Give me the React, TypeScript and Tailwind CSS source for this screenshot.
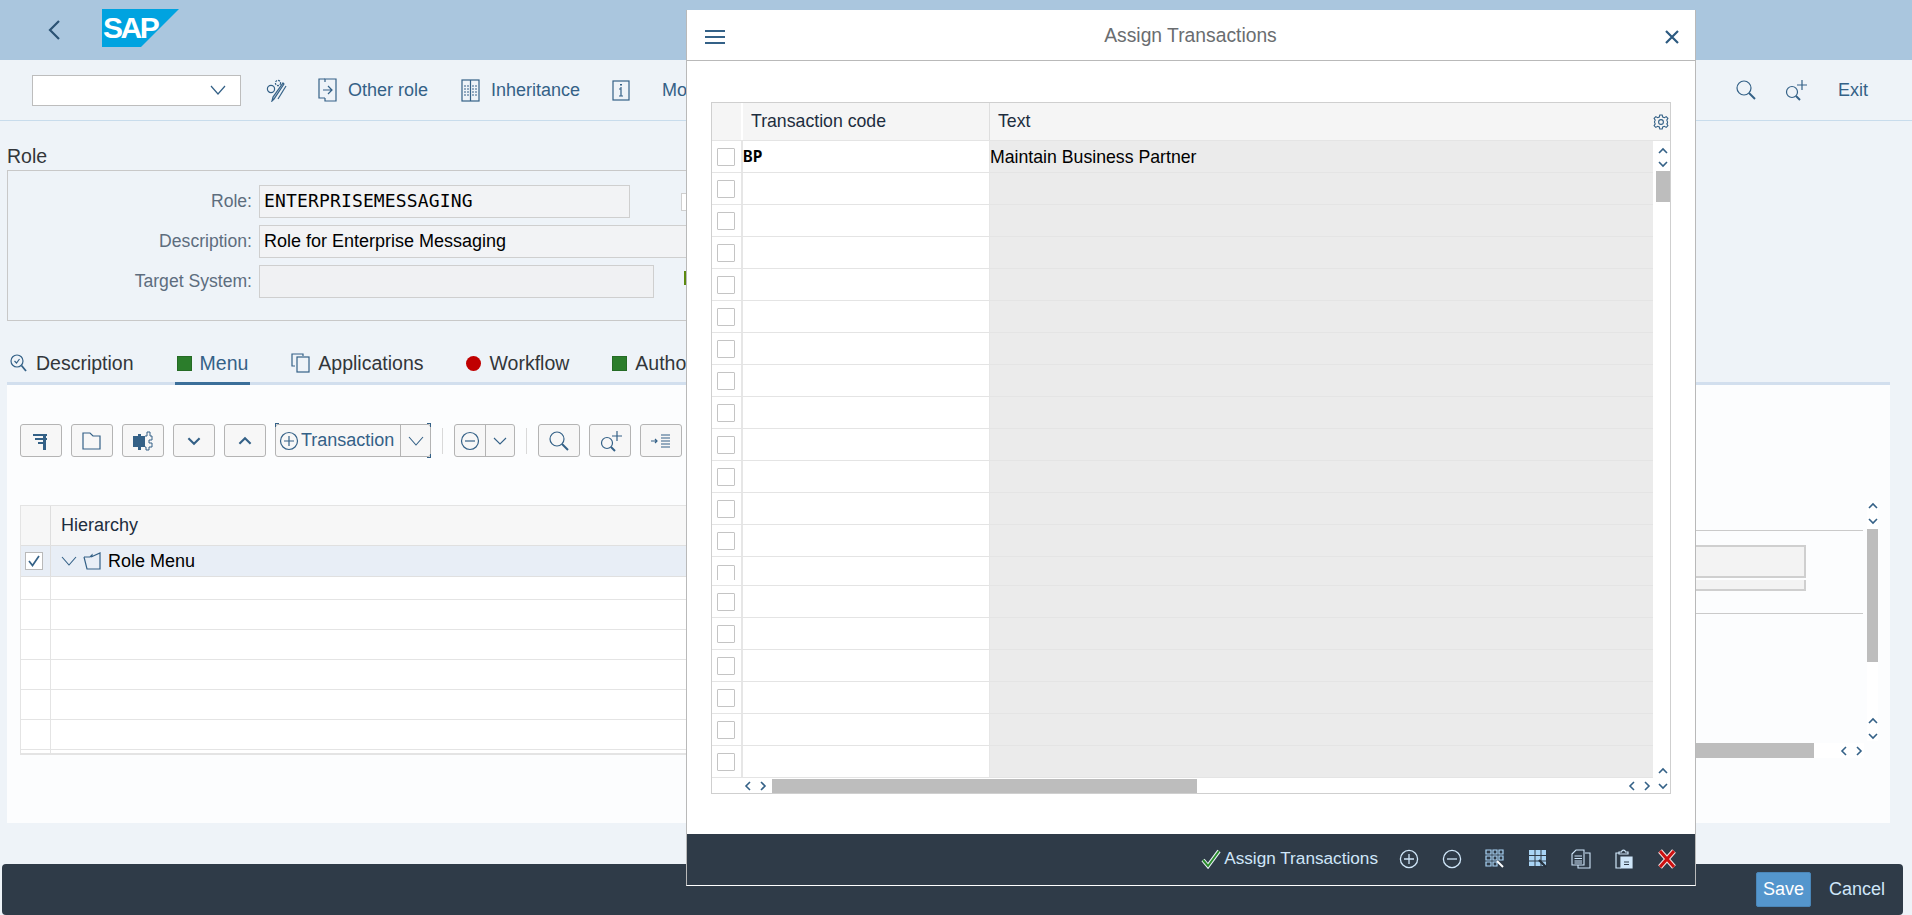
import type { ReactNode } from "react";

const blue = "#346187";

function Ico({ w = 20, h = 20, children, className = "" }: { w?: number; h?: number; children: ReactNode; className?: string }) {
  return (
    <svg width={w} height={h} viewBox={`0 0 ${w} ${h}`} fill="none" stroke={blue} strokeWidth="1.2" className={`shrink-0 ${className}`}>
      {children}
    </svg>
  );
}

function Chev({ dir, size = 10, color = "#346187", sw = 1.6 }: { dir: "up" | "down" | "left" | "right"; size?: number; color?: string; sw?: number }) {
  const d = { up: "M1 7L5 3L9 7", down: "M1 3L5 7L9 3", left: "M7 1L3 5L7 9", right: "M3 1L7 5L3 9" }[dir];
  return (
    <svg width={size} height={size} viewBox="0 0 10 10" fill="none" stroke={color} strokeWidth={sw} className="shrink-0">
      <path d={d} />
    </svg>
  );
}

function Search({ plus = false }: { plus?: boolean }) {
  return (
    <Ico w={24} h={22}>
      <circle cx={plus ? "9" : "10"} cy={plus ? "13" : "9"} r={plus ? "5.5" : "7"} />
      <path d={plus ? "M13 17L17 21" : "M15 14L21 20"} strokeWidth="2" />
      {plus && <path d="M19 1V11M14 6H24" />}
    </Ico>
  );
}

function ToolBtn({ children }: { children: ReactNode }) {
  return <div className="w-[42px] h-[33px] flex items-center justify-center bg-[#f7f7f7] border border-[#b4b4b4] rounded-[3px]">{children}</div>;
}

function Field({ label, value, mono, width, muted }: { label: string; value?: string; mono?: boolean; width: string; muted?: boolean }) {
  return (
    <div className="flex items-center h-[33px]">
      <div className="w-[251px] text-right pr-[7px] text-[17.6px] text-[#5d6d7e]">{label}</div>
      <div
        className={`${width} h-[33px] flex items-center px-[4px] border border-[#cfcfcf] ${muted ? "bg-[#f0f1f3]" : "bg-[#f2f3f5]"} ${mono ? "font-['DejaVu_Sans_Mono',monospace] text-[18px] tracking-[0.15px] text-black" : "text-black"}`}
      >
        {value}
      </div>
    </div>
  );
}

function Tab({ icon, label, active }: { icon: ReactNode; label: string; active?: boolean }) {
  return (
    <div className={`h-[43px] flex items-center gap-[8px] px-[2px] pt-[2px] -mb-[3px] border-b-[3px] text-[19.5px] ${active ? "border-[#3b6f9a] text-[#346187]" : "border-transparent text-[#32363a]"}`}>
      {icon}
      <span>{label}</span>
    </div>
  );
}

const greenSquare = <span className="w-[15px] h-[15px] bg-[#2b7d2b] border border-[#256b25]" />;

const bgRows = [23, 30, 30, 30, 30, 30, 4];
// row 14 in the popup table is clipped a little shorter, as in the SAP grid
const rowHeights = [32, 32, 32, 32, 32, 32, 32, 32, 32, 32, 32, 32, 32, 29, 32, 32, 32, 32, 32, 32];

function DialogTable() {
  return (
    <div className="w-[960px] h-[692px] flex flex-col border border-[#cfcfcf] bg-white text-[17.7px]">
      <div className="h-[38px] shrink-0 flex bg-[#f5f5f5] border-b border-[#e4e4e4] text-[#1d2d3e]">
        <div className="w-[31px] border-r-2 border-white" />
        <div className="w-[247px] pl-[8px] flex items-center border-r border-[#dedede]">Transaction code</div>
        <div className="flex-1 pl-[8px] flex items-center justify-between pr-[1px] text-[#1d2d3e]">
          <span>Text</span>
          <svg width="16" height="16" viewBox="0 0 16 16" fill="none" stroke={blue} strokeWidth="1.1">
            <circle cx="8" cy="8" r="2.4" />
            <path d="M6.8 1H9.2L9.7 3L11.4 3.7L13.2 2.6L14.9 4.3L13.8 6.1L14.5 7.8V8.2L14.5 9L13.8 9.9L14.9 11.7L13.2 13.4L11.4 12.3L9.7 13L9.2 15H6.8L6.3 13L4.6 12.3L2.8 13.4L1.1 11.7L2.2 9.9L1.5 8.2V7.8L2.2 6.1L1.1 4.3L2.8 2.6L4.6 3.7L6.3 3L6.8 1Z" />
          </svg>
        </div>
      </div>
      <div className="flex-1 flex min-h-0">
        <div className="flex-1 flex flex-col min-w-0">
          {rowHeights.map((h, i) => (
            <div key={i} className="flex shrink-0 border-b border-[#e4e4e4]" style={{ height: h }}>
              <div className="w-[31px] pr-[1px] border-r-2 border-[#e6e6e6] flex justify-center">
                <div className={`${h < 32 ? "h-[15px] mt-[8px]" : "h-[18px] mt-[7px]"} overflow-hidden`}>
                  <span className="block w-[18px] h-[18px] bg-white border border-[#c4c4c4] rounded-[1px]" />
                </div>
              </div>
              <div className="w-[247px] border-r border-[#e6e6e6] flex items-center leading-none font-['DejaVu_Sans_Mono',monospace] font-bold text-[16px] text-black">
                {i === 0 ? "BP" : ""}
              </div>
              <div className="flex-1 bg-[#ebebeb] flex items-center pt-[1px] text-black">{i === 0 ? "Maintain Business Partner" : ""}</div>
            </div>
          ))}
          <div className="flex-1 flex items-center pl-[31px]">
            <div className="flex gap-[5px] w-[29px]">
              <Chev dir="left" />
              <Chev dir="right" />
            </div>
            <div className="w-[425px] h-[14px] bg-[#bdbdbd]" />
            <div className="flex-1" />
            <div className="flex gap-[5px] pr-[1px]">
              <Chev dir="left" />
              <Chev dir="right" />
            </div>
          </div>
        </div>
        <div className="w-[17px] pl-[3px] shrink-0 flex flex-col items-center bg-white">
          <div className="h-[16px] pt-[3px] flex items-center"><Chev dir="up" /></div>
          <div className="h-[14px] flex items-center"><Chev dir="down" /></div>
          <div className="w-[14px] h-[31px] bg-[#bdbdbd]" />
          <div className="flex-1" />
          <div className="h-[15px] flex items-center"><Chev dir="up" /></div>
          <div className="h-[15px] flex items-center"><Chev dir="down" /></div>
        </div>
      </div>
    </div>
  );
}

function Dialog() {
  return (
    <div className="absolute left-[686px] top-[10px] w-[1010px] h-[876px] flex flex-col bg-white border-x border-[#b9b9b9] border-b border-b-white">
      <div className="h-[51px] shrink-0 flex items-center justify-between pl-[18px] pr-[15px] pt-[3px] border-b border-[#b9b9b9]">
        <svg width="20" height="16" viewBox="0 0 20 16" fill="#346187">
          <rect y="1" width="20" height="2" />
          <rect y="7" width="20" height="2" />
          <rect y="13" width="20" height="2" />
        </svg>
        <div className="mr-[8px] text-[19.3px] text-[#6a6d70]">Assign Transactions</div>
        <svg width="16" height="16" viewBox="0 0 16 16" stroke="#2c5a80" strokeWidth="2.2">
          <path d="M2 2L14 14M14 2L2 14" />
        </svg>
      </div>
      <div className="flex-1 pl-[24px] pt-[41px]">
        <DialogTable />
      </div>
      <div className="h-[51px] shrink-0 bg-[#2f3b48] flex items-center justify-end pr-[18px] pb-[2px] text-[#cfe6f9] text-[17.2px]">
        <svg width="20" height="20" viewBox="0 0 20 20" fill="none" className="mr-[3px]">
          <path d="M2 11L7 17L18 2" stroke="#e8f1f7" strokeWidth="4" />
          <path d="M2 11L7 17L18 2" stroke="#2b8a2b" strokeWidth="2" />
        </svg>
        <span className="mr-[21px]">Assign Transactions</span>
        <div className="flex items-center gap-[23px]">
          <svg width="20" height="20" viewBox="0 0 20 20" fill="none" stroke="#cfe6f9" strokeWidth="1.3"><circle cx="10" cy="10" r="8.6" /><path d="M10 5V15M5 10H15" /></svg>
          <svg width="20" height="20" viewBox="0 0 20 20" fill="none" stroke="#cfe6f9" strokeWidth="1.3"><circle cx="10" cy="10" r="8.6" /><path d="M5 10H15" /></svg>
          <svg width="20" height="20" viewBox="0 0 20 20" fill="none" stroke="#a9d4f5" strokeWidth="1.2">
            <path d="M1 1H6V5H1ZM8 1H12V5H8ZM14 1H18V5H14ZM1 7H6V11H1ZM8 7H12V11H8ZM14 7H18V11H14ZM1 13H6V17H1ZM8 13H12V17H8Z" />
            <path d="M12 12L18 18" stroke="#fff" strokeWidth="2" />
          </svg>
          <svg width="20" height="20" viewBox="0 0 20 20">
            <path d="M1 1H18V17H1Z" fill="#a9d4f5" />
            <path d="M7 1V17M13 1V17M1 6.5H18M1 12H18" stroke="#2f3b48" strokeWidth="1" />
            <path d="M11 11L18 18" stroke="#25303b" strokeWidth="2.4" />
          </svg>
          <svg width="20" height="20" viewBox="0 0 20 20" fill="none" stroke="#cfe6f9" strokeWidth="1.1">
            <path d="M1 5L5 1H13V16H1Z" />
            <path d="M14 4H19V19H7V16" />
            <path d="M3.5 7H11M3.5 9.5H11M3.5 12H11M3.5 14H11" />
          </svg>
          <svg width="20" height="20" viewBox="0 0 20 20" fill="none" stroke="#cfe6f9" strokeWidth="1.2">
            <path d="M5 4H2V19H7" />
            <path d="M5 5V3H7.5C8 0.5 11 0.5 11.5 3H14V5Z" />
            <path d="M7 8H18V19H7Z" fill="#cfe6f9" />
            <path d="M10 13H15M10 15.5H15" stroke="#2f3b48" />
          </svg>
          <svg width="20" height="20" viewBox="0 0 20 20" fill="none">
            <path d="M3 2L17 18M17 2L3 18" stroke="#f6e3e3" strokeWidth="5" />
            <path d="M3 2L17 18M17 2L3 18" stroke="#cc1010" strokeWidth="3" />
          </svg>
        </div>
      </div>
    </div>
  );
}

export default function App() {
  return (
    <div className="relative w-[1912px] h-[915px] overflow-hidden flex flex-col bg-[#eef3f8] font-['Liberation_Sans',Arial,sans-serif] text-[18px] leading-tight">
      <div className="h-[60px] shrink-0 flex items-center bg-[#aac6de]">
        <div className="w-[102px] pl-[47px] shrink-0">
          <svg width="14" height="22" viewBox="0 0 14 22" fill="none" stroke="#2b5273" strokeWidth="2.2"><path d="M12 2L3 11L12 20" /></svg>
        </div>
        <svg width="77" height="38" viewBox="0 0 77 38" className="-mt-[4px]">
          <polygon points="0,0 77,0 39,38 0,38" fill="#00a3e0" />
          <text x="1" y="29" fill="#fff" fontFamily="Liberation Sans" fontWeight="700" fontSize="30" letterSpacing="-2.5">SAP</text>
        </svg>
      </div>

      <div className="h-[61px] shrink-0 flex items-center border-b border-[#c8dcec] pl-[32px] text-[#346187]">
        <div className="w-[209px] h-[31px] flex items-center justify-end pr-[14px] bg-white border border-[#bdbdbd]">
          <svg width="16" height="10" viewBox="0 0 16 10" fill="none" stroke={blue} strokeWidth="1.2"><path d="M1 1L8 9L15 1" /></svg>
        </div>
        <div className="ml-[25px] w-[20px]">
          <Ico w={22} h={24}>
            <circle cx="5" cy="11" r="3.6" />
            <circle cx="12" cy="5" r="2.6" strokeDasharray="2 1" />
            <path d="M18 6L8 21L6 23L7 19L17 5Z" fill="#346187" fillOpacity="0.3" />
            <path d="M20 8L12 21" />
          </Ico>
        </div>
        <div className="ml-[32px] flex items-center gap-[11px]">
          <Ico w={19} h={24}>
            <path d="M7 1H1V20H7" />
            <path d="M7 4V1H18V23H7V20" />
            <path d="M5 12H14M10 8L14 12L10 16" />
          </Ico>
          <span>Other role</span>
        </div>
        <div className="ml-[33px] flex items-center gap-[11px]">
          <Ico w={19} h={24}>
            <rect x="1" y="2" width="17" height="21" />
            <path d="M9.5 2V23" />
            <path d="M3 8H8M3 11H8M3 14H8M3 17H8M11 8H16M11 11H16M11 14H16M11 17H16" strokeDasharray="2 1" />
          </Ico>
          <span>Inheritance</span>
        </div>
        <div className="ml-[32px]">
          <Ico w={18} h={24}>
            <rect x="1" y="3" width="16" height="19" />
            <path d="M9 9V18M7 18H11M7 11H9" />
            <path d="M9 6V7.5" strokeWidth="2" />
          </Ico>
        </div>
        <span className="ml-[32px]">More</span>
        <div className="ml-auto flex items-center pr-[44px]">
          <Search />
          <div className="ml-[25px]"><Search plus /></div>
          <span className="ml-[31px]">Exit</span>
        </div>
      </div>

      <div className="h-[49px] shrink-0 flex items-end pl-[7px] pb-[2px] text-[19.5px] text-[#32363a]">Role</div>

      <div className="w-[1500px] h-[151px] shrink-0 ml-[7px] pt-[14px] flex flex-col gap-[7px] border border-[#c8c8c8]">
        <div className="relative">
          <Field label="Role:" value="ENTERPRISEMESSAGING" mono width="w-[371px]" />
          <span className="absolute left-[673px] top-[8px] w-[20px] h-[18px] bg-white border border-[#cfcfcf]" />
        </div>
        <Field label="Description:" value="Role for Enterprise Messaging" width="w-[800px]" />
        <div className="relative">
          <Field label="Target System:" width="w-[395px]" muted />
          <span className="absolute left-[676px] top-[6px] w-[14px] h-[14px] bg-[#5c8a10]" />
        </div>
      </div>

      <div className="h-[64px] shrink-0 ml-[7px] w-[1883px] flex items-end gap-[39px] border-b-[3px] border-[#d2dfee] pl-[1px]">
        <Tab
          label="Description"
          icon={
            <Ico w={18} h={18}>
              <circle cx="7" cy="7" r="6" />
              <path d="M11.5 11.5L16 17" strokeWidth="1.8" />
              <path d="M4.5 7L6.5 9L9.5 5" />
            </Ico>
          }
        />
        <Tab label="Menu" icon={greenSquare} active />
        <Tab
          label="Applications"
          icon={
            <Ico w={19} h={20}>
              <path d="M4 13H1V1H12V3" />
              <rect x="6" y="4" width="12" height="15" />
            </Ico>
          }
        />
        <Tab label="Workflow" icon={<span className="w-[15px] h-[15px] rounded-full bg-[#c00000]" />} />
        <Tab label="Authorization" icon={greenSquare} />
      </div>

      <div className="relative h-[438px] shrink-0 ml-[7px] w-[1883px] flex bg-[#fcfdfe]">
        <div className="w-[1000px] shrink-0 pl-[13px] pt-[39px]">
          <div className="flex items-center gap-[9px] h-[33px]">
            <ToolBtn>
              <svg width="20" height="20" viewBox="0 0 20 20" fill="#346187">
                <path d="M2 3H16V5H2ZM4 7H16V9H4ZM7 11H12V13H7ZM12 5H15V19H12Z" />
              </svg>
            </ToolBtn>
            <ToolBtn>
              <Ico w={20} h={18}><path d="M1 1H8L11 4H18V17H1Z" /></Ico>
            </ToolBtn>
            <ToolBtn>
              <svg width="22" height="22" viewBox="0 0 22 22" fill="none">
                <path d="M1 6H6V4H9V6H13V17H9V20H6V17H1Z" fill="#346187" />
                <path d="M13 6H15V2H18V6H20V10H17V13H20V17H17V20H14V17H13" stroke="#346187" strokeWidth="1" />
              </svg>
            </ToolBtn>
            <ToolBtn><Chev dir="down" size={14} sw={1.5} /></ToolBtn>
            <ToolBtn><Chev dir="up" size={14} sw={1.5} /></ToolBtn>

            <div className="relative w-[156px] h-[33px] flex bg-[#f7f7f7] border border-[#b4b4b4] rounded-[3px] text-[#346187]">
              <div className="flex-1 flex items-center gap-[2px] pl-[3px] border-r border-[#b4b4b4]">
                <Ico w={20} h={20}><circle cx="10" cy="10" r="8.5" /><path d="M10 5V15M5 10H15" /></Ico>
                <span>Transaction</span>
              </div>
              <div className="w-[29px] flex items-center justify-center">
                <svg width="16" height="10" viewBox="0 0 16 10" fill="none" stroke={blue} strokeWidth="1.1"><path d="M1 1L8 9L15 1" /></svg>
              </div>
              <span className="absolute -left-[1px] -top-[2px] w-[4px] h-[4px] border-l border-t border-[#346187]" />
              <span className="absolute -right-[1px] -top-[2px] w-[4px] h-[4px] border-r border-t border-[#346187]" />
              <span className="absolute -right-[1px] -bottom-[2px] w-[4px] h-[4px] border-r border-b border-[#346187]" />
            </div>

            <span className="w-px h-[26px] mx-[2px] bg-[#d9d9d9]" />

            <div className="w-[61px] h-[33px] flex bg-[#f7f7f7] border border-[#b4b4b4] rounded-[3px]">
              <div className="w-[31px] flex items-center justify-center border-r border-[#b4b4b4]">
                <Ico w={20} h={20}><circle cx="10" cy="10" r="8.5" /><path d="M5 10H15" /></Ico>
              </div>
              <div className="flex-1 flex items-center justify-center">
                <svg width="14" height="10" viewBox="0 0 14 10" fill="none" stroke={blue} strokeWidth="1.1"><path d="M1 2L7 8L13 2" /></svg>
              </div>
            </div>

            <span className="w-px h-[26px] mx-[2px] bg-[#d9d9d9]" />

            <ToolBtn><Search /></ToolBtn>
            <ToolBtn><Search plus /></ToolBtn>
            <ToolBtn>
              <Ico w={20} h={14}>
                <path d="M0 7H6M4 5L6 7L4 9" />
                <path d="M10 1H19M10 4H19M10 7H19M10 10H19M10 13H19" />
              </Ico>
            </ToolBtn>
          </div>

          <div className="mt-[48px] w-[987px] border border-[#e4e4e4]">
            <div className="h-[40px] flex bg-[#f7f7f7] border-b border-[#e0e0e0] text-[#1d2d3e]">
              <div className="w-[30px] border-r border-[#dedede]" />
              <div className="pl-[10px] flex items-center">Hierarchy</div>
            </div>
            <div className="h-[31px] flex bg-[#e8eef6] border-b border-[#e0e0e0] text-black">
              <div className="w-[30px] pr-[3px] border-r border-[#dedede] flex items-center justify-center">
                <span className="w-[18px] h-[18px] bg-white border border-[#b9b9b9] flex items-center justify-center">
                  <svg width="12" height="12" viewBox="0 0 12 12" fill="none" stroke={blue} strokeWidth="1.7"><path d="M1 6L4.5 10.5L11 1" /></svg>
                </span>
              </div>
              <div className="pl-[10px] flex items-center gap-[6px]">
                <svg width="16" height="10" viewBox="0 0 16 10" fill="none" stroke={blue} strokeWidth="1.1"><path d="M1 1L8 9L15 1" /></svg>
                <Ico w={19} h={18}>
                  <path d="M1 5H7L9 3V5" />
                  <path d="M1 5L4 17H17V1L8 5" />
                </Ico>
                <span>Role Menu</span>
              </div>
            </div>
            {bgRows.map((h, i) => (
              <div key={i} className="flex border-b border-[#e4e4e4] bg-white" style={{ height: h }}>
                <div className="w-[30px] border-r border-[#e4e4e4]" />
              </div>
            ))}
          </div>
        </div>

        <div className="ml-[500px] flex-1 pr-[27px] pt-[145px]">
          <div className="h-[84px] flex flex-col border-y border-[#cacaca] pt-[14px]">
            <div className="h-[33px] mr-[57px] bg-[#f3f3f3] border-2 border-[#cfcfcf]" />
            <div className="h-[11px] mt-[2px] mr-[57px] bg-[#f3f3f3] border-2 border-t-0 border-[#cfcfcf]" />
          </div>
        </div>

        <div className="absolute left-[1860px] top-[116px] flex flex-col items-center w-[11px] bg-white">
          <Chev dir="up" />
          <span className="mt-[5px]"><Chev dir="down" /></span>
          <span className="mt-[3px] w-[11px] h-[133px] bg-[#bdbdbd]" />
          <span className="mt-[54px]"><Chev dir="up" /></span>
          <span className="mt-[5px]"><Chev dir="down" /></span>
        </div>
        <div className="absolute left-[1490px] top-[358px] w-[367px] h-[15px] flex items-center bg-white">
          <span className="w-[317px] h-[15px] shrink-0 bg-[#bdbdbd]" />
          <span className="ml-[25px]"><Chev dir="left" /></span>
          <span className="ml-[5px]"><Chev dir="right" /></span>
        </div>
      </div>

      <div className="mt-auto ml-[2px] w-[1901px] h-[51px] shrink-0 flex items-center justify-end gap-[18px] pr-[18px] bg-[#2f3b48] rounded-[4px]">
        <div className="w-[55px] h-[35px] flex items-center justify-center bg-[#5496cd] border border-[#4a86b8] rounded-[2px] text-white">Save</div>
        <span className="text-[#cfe6f9]">Cancel</span>
      </div>

      <Dialog />
    </div>
  );
}
